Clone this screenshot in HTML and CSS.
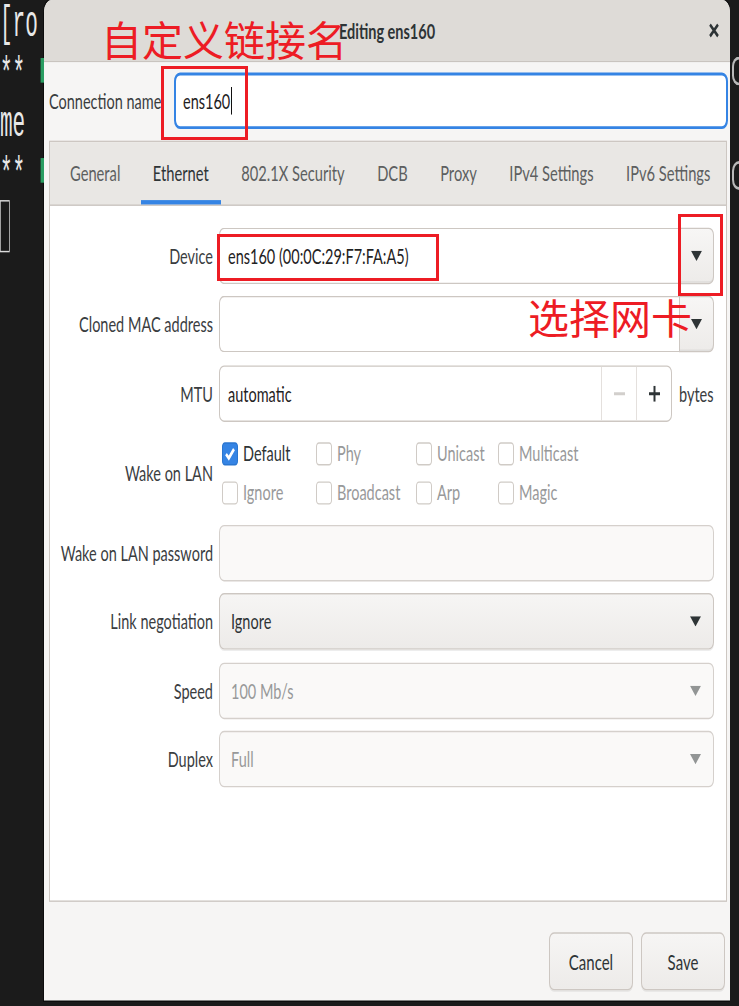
FILE: index.html
```html
<!DOCTYPE html>
<html lang="en">
<head>
<meta charset="utf-8">
<title>Editing ens160</title>
<link rel="stylesheet" href="styles.css">
</head>
<body>
<div class="screen">
  <div class="term term-left">
    <div class="term-text">
      <div class="tl">[ro</div>
      <div class="tl">**<span class="hl"></span></div>
      <div class="tl">me</div>
      <div class="tl">**<span class="hl"></span></div>
      <div class="tl"><span class="cursor"></span></div>
    </div>
  </div>

  <div class="dialog">
    <header class="titlebar">
      <span></span>
      <span class="title">Editing ens160</span>
      <span class="close"><svg width="10" height="10" viewBox="0 0 10 10"><path d="M1 1L9 9M9 1L1 9" stroke="#2e3436" stroke-width="2.2" fill="none"/></svg></span>
    </header>

    <div class="name-row">
      <span class="name-label">Connection name</span>
      <div class="entry focus"><span>ens160</span><span class="caret"></span></div>
    </div>

    <div class="notebook">
      <nav class="tabs">
        <span class="tab">General</span>
        <span class="tab active">Ethernet</span>
        <span class="tab">802.1X Security</span>
        <span class="tab">DCB</span>
        <span class="tab">Proxy</span>
        <span class="tab">IPv4 Settings</span>
        <span class="tab">IPv6 Settings</span>
      </nav>
      <div class="page">
        <span class="lbl">Device</span>
        <div class="combo">
          <div class="field">ens160 (00:0C:29:F7:FA:A5)</div>
          <div class="drop"><svg width="11" height="7" viewBox="0 0 11 7"><path d="M0 0H11L5.5 7Z" fill="#2e3436"/></svg></div>
        </div>

        <span class="lbl">Cloned MAC address</span>
        <div class="combo">
          <div class="field"></div>
          <div class="drop"><svg width="11" height="7" viewBox="0 0 11 7"><path d="M0 0H11L5.5 7Z" fill="#2e3436"/></svg></div>
        </div>

        <span class="lbl">MTU</span>
        <div class="mtu">
          <div class="spin">
            <div class="val">automatic</div>
            <div class="sbtn"><svg width="11" height="11" viewBox="0 0 11 11"><path d="M0 5.5H11" stroke="#d2cfcc" stroke-width="2"/></svg></div>
            <div class="sbtn"><svg width="11" height="11" viewBox="0 0 11 11"><path d="M0 5.5H11M5.5 0V11" stroke="#2e3436" stroke-width="2"/></svg></div>
          </div>
          <span class="unit">bytes</span>
        </div>

        <span class="lbl">Wake on LAN</span>
        <div class="wol">
          <span class="chk on"><span class="box"><svg width="14" height="14" viewBox="0 0 14 14"><path d="M3 7.2L5.8 10L11 3.8" stroke="#fff" stroke-width="2.4" fill="none"/></svg></span>Default</span>
          <span class="chk"><span class="box"></span>Phy</span>
          <span class="chk"><span class="box"></span>Unicast</span>
          <span class="chk"><span class="box"></span>Multicast</span>
          <span class="chk"><span class="box"></span>Ignore</span>
          <span class="chk"><span class="box"></span>Broadcast</span>
          <span class="chk"><span class="box"></span>Arp</span>
          <span class="chk"><span class="box"></span>Magic</span>
        </div>

        <span class="lbl">Wake on LAN password</span>
        <div class="plain"></div>

        <span class="lbl">Link negotiation</span>
        <div class="sel">
          <span>Ignore</span>
          <svg width="11" height="7" viewBox="0 0 11 7"><path d="M0 0H11L5.5 7Z" fill="#2e3436"/></svg>
        </div>

        <span class="lbl">Speed</span>
        <div class="sel dis">
          <span>100 Mb/s</span>
          <svg width="11" height="7" viewBox="0 0 11 7"><path d="M0 0H11L5.5 7Z" fill="#929595"/></svg>
        </div>

        <span class="lbl">Duplex</span>
        <div class="sel dis">
          <span>Full</span>
          <svg width="11" height="7" viewBox="0 0 11 7"><path d="M0 0H11L5.5 7Z" fill="#929595"/></svg>
        </div>
      </div>
    </div>

    <footer class="actions">
      <button class="btn">Cancel</button>
      <button class="btn">Save</button>
    </footer>
  </div>

  <div class="term term-right">
    <span class="rglyph"></span>
    <span class="rglyph"></span>
  </div>
</div>

<div class="annot">
  <div class="note note-1">自定义链接名</div>
  <div class="mark mark-1"></div>
  <div class="mark mark-2"></div>
  <div class="mark mark-3"></div>
  <div class="note note-2">选择网卡</div>
</div>
</body>
</html>
```

FILE: styles.css
```css
html, body {
  margin: 0;
  height: 100%;
}

body {
  background: #1b1b1b;
  font-family: Lato, "Noto Sans", sans-serif;
  font-size: 14.5px;
  color: #2e3436;
  position: relative;
  overflow: hidden;
}

/* the whole screenshot is stretched vertically */
.screen {
  width: 739px;
  height: 694px;
  transform: scaleY(1.45);
  transform-origin: 0 0;
  display: grid;
  grid-template-columns: 44px 686px 9px;
}

.term {
  overflow: hidden;
  background: #1b1b1b;
  color: #e8e8e8;
}

.term-text {
  font-family: "Liberation Mono", monospace;
  font-size: 30px;
  line-height: 34.5px;
  transform: scaleX(0.7);
  transform-origin: 0 0;
}

.tl {
  white-space: pre;
  height: 34.5px;
}

.hl {
  display: inline-block;
  width: 14px;
  height: 17px;
  margin-left: 22px;
  vertical-align: 3px;
  background: #2a9d62;
}

.cursor {
  display: inline-block;
  width: 14px;
  height: 36px;
  box-sizing: border-box;
  border: 1px solid #dcdcdc;
  vertical-align: top;
}

.term-right {
  display: flex;
  flex-direction: column;
  gap: 52px;
  padding-top: 39px;
}

.rglyph {
  display: block;
  width: 8px;
  height: 20px;
  margin-left: 2px;
  box-sizing: border-box;
  border: 2px solid #b9b9b9;
  border-right: none;
  border-radius: 7px 0 0 7px;
}

/* dialog */
.dialog {
  background: #f6f5f4;
  border-radius: 8px 8px 0 0;
  height: 690px;
  display: flex;
  flex-direction: column;
  box-shadow: 0 0 0 1px rgba(0, 0, 0, 0.5);
}

.titlebar {
  height: 43px;
  box-sizing: border-box;
  background: #dedbd7;
  border-bottom: 1px solid #c9c4bf;
  border-radius: 8px 8px 0 0;
  display: grid;
  grid-template-columns: 1fr auto 1fr;
  align-items: center;
}

.title {
  font-weight: 700;
  color: #2e3436;
}

.close {
  justify-self: end;
  margin-right: 11px;
  display: flex;
}

.name-row {
  display: flex;
  align-items: center;
  gap: 14px;
  padding: 7px 2px 0 5px;
}

.name-label {
  flex: none;
  width: 111px;
  white-space: nowrap;
  color: #3a3d3f;
}

.entry {
  flex: 1;
  height: 38.5px;
  box-sizing: border-box;
  border: 2px solid #3584e4;
  border-radius: 6px;
  background: #fff;
  display: flex;
  align-items: center;
  padding-left: 7px;
  color: #1f2223;
}

.caret {
  width: 1px;
  height: 19px;
  background: #111;
  margin-left: 1px;
}

.notebook {
  margin: 8.5px 3px 0 5px;
  border: 1px solid #cdc7c2;
  flex: 1;
  display: flex;
  flex-direction: column;
  background: #fff;
}

.tabs {
  height: 44px;
  box-sizing: border-box;
  background: #e9e7e4;
  border-bottom: 1px solid #cdc7c2;
  display: flex;
  gap: 8.5px;
  padding-left: 8px;
}

.tab {
  padding: 0 12px;
  display: flex;
  align-items: center;
  color: #5d5f60;
  font-size: 14.7px;
  border-top: 2px solid transparent;
  border-bottom: 3px solid transparent;
}

.tab.active {
  color: #2e3436;
  border-bottom-color: #3584e4;
}

.page {
  flex: 1;
  padding: 14.5px 13px 0 0;
  display: grid;
  grid-template-columns: 163px 1fr;
  column-gap: 6px;
  row-gap: 8.5px;
  align-content: start;
}

.lbl {
  justify-self: end;
  align-self: center;
  color: #3a3d3f;
  white-space: nowrap;
}

.combo {
  display: flex;
  height: 39px;
}

.combo .field {
  flex: 1;
  box-sizing: border-box;
  border: 1px solid #cdc7c2;
  border-right: none;
  border-radius: 5px 0 0 5px;
  background: #fff;
  display: flex;
  align-items: center;
  padding-left: 8px;
  color: #1f2223;
}

.combo .drop {
  width: 35px;
  box-sizing: border-box;
  border: 1px solid #cdc7c2;
  border-radius: 0 5px 5px 0;
  background: linear-gradient(#f7f6f5, #edebe9);
  box-shadow: inset 0 -1px rgba(0, 0, 0, 0.06);
  display: flex;
  align-items: center;
  justify-content: center;
}

.mtu {
  display: flex;
  align-items: center;
  gap: 7px;
}

.spin {
  width: 453px;
  height: 39px;
  box-sizing: border-box;
  border: 1px solid #cdc7c2;
  border-radius: 5px;
  background: #fff;
  display: flex;
}

.spin .val {
  flex: 1;
  display: flex;
  align-items: center;
  padding-left: 8px;
  color: #1f2223;
}

.spin .sbtn {
  width: 34px;
  border-left: 1px solid #e4e0dd;
  display: flex;
  align-items: center;
  justify-content: center;
}

.unit {
  color: #3a3d3f;
}

.wol {
  display: grid;
  grid-template-columns: 94px 100px 82px auto;
  grid-auto-rows: 27px;
  padding-left: 3px;
  align-items: center;
}

.chk {
  display: flex;
  align-items: center;
  gap: 5px;
  color: #98999a;
}

.chk.on {
  color: #2e3436;
}

.box {
  width: 16px;
  height: 16px;
  box-sizing: border-box;
  border: 1px solid #d0cbc6;
  border-radius: 3px;
  background: #fff;
  display: flex;
  align-items: center;
  justify-content: center;
}

.chk.on .box {
  background: #3584e4;
  border-color: #2a76d0;
}

.plain {
  height: 39px;
  box-sizing: border-box;
  border: 1px solid #d5d0cc;
  border-radius: 5px;
  background: #faf9f8;
}

.sel {
  height: 39px;
  box-sizing: border-box;
  border: 1px solid #cdc7c2;
  border-radius: 5px;
  background: linear-gradient(#f6f5f4, #edebe9);
  box-shadow: 0 1px rgba(0, 0, 0, 0.07);
  display: flex;
  align-items: center;
  justify-content: space-between;
  padding: 0 12px 0 11px;
  color: #2e3436;
}

.sel.dis {
  background: #faf9f8;
  border-color: #d5d0cc;
  box-shadow: none;
  color: #98999a;
}

.actions {
  display: flex;
  justify-content: flex-end;
  gap: 8px;
  padding: 21px 5px 7px 0;
}

.btn {
  width: 84px;
  height: 40px;
  box-sizing: border-box;
  border: 1px solid #cdc7c2;
  border-radius: 5px;
  background: linear-gradient(#f6f5f4, #edebe9);
  box-shadow: 0 1px rgba(0, 0, 0, 0.07);
  font-family: Lato, "Noto Sans", sans-serif;
  font-size: 15px;
  color: #2e3436;
  padding: 0;
}

/* red annotations drawn on top of the screenshot */
.annot {
  position: absolute;
  inset: 0;
  pointer-events: none;
}

.note {
  position: absolute;
  color: #ed1c24;
  font-family: "Noto Sans CJK SC", sans-serif;
  font-size: 41px;
  line-height: 1;
  white-space: nowrap;
}

.note-1 {
  left: 101px;
  top: 18px;
}

.note-2 {
  left: 528px;
  top: 296px;
}

.mark {
  position: absolute;
  box-sizing: border-box;
  border: 3px solid #ed1c24;
}

.mark-1 {
  left: 161px;
  top: 66px;
  width: 87px;
  height: 74px;
}

.mark-2 {
  left: 217px;
  top: 234px;
  width: 222px;
  height: 47px;
}

.mark-3 {
  left: 678px;
  top: 214px;
  width: 45px;
  height: 82px;
}
```
